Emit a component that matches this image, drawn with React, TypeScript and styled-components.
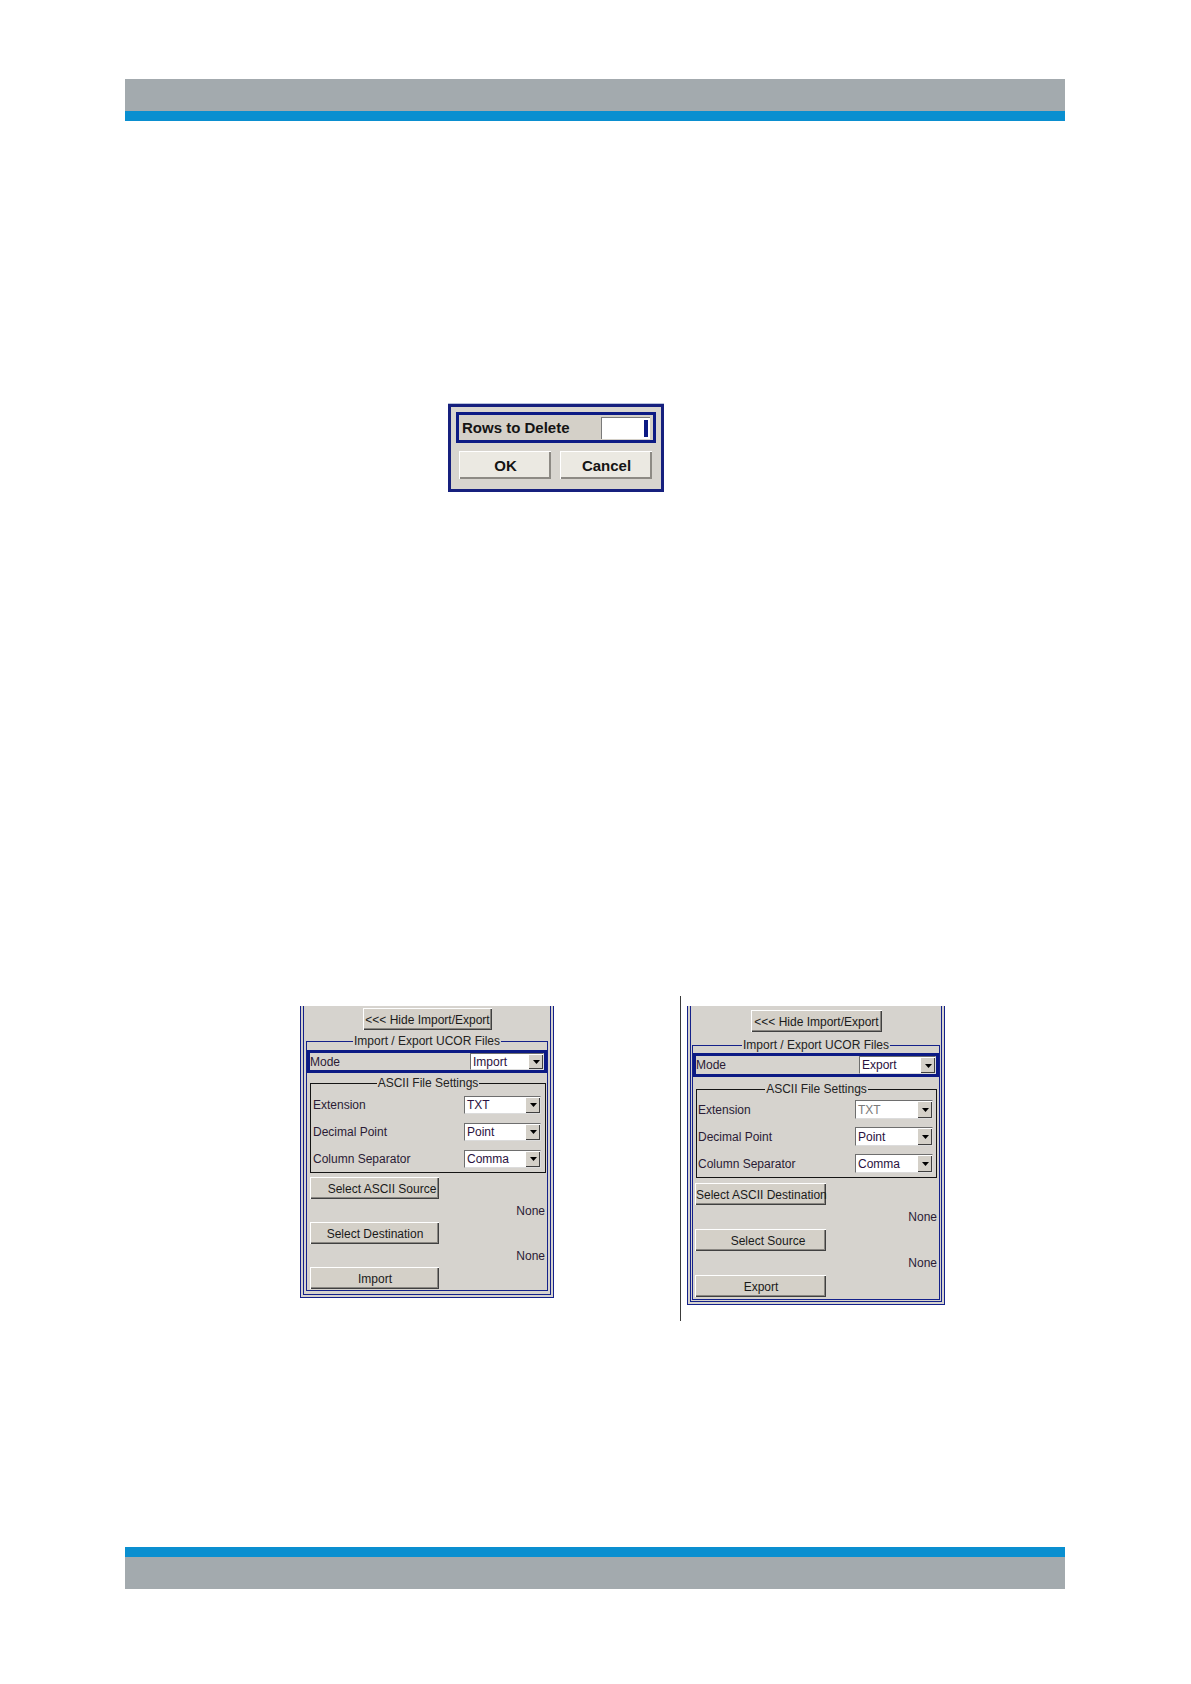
import React from 'react';
import styled, { createGlobalStyle } from 'styled-components';

const GlobalStyle = createGlobalStyle`
  *, *::before, *::after { box-sizing: border-box; }
  html, body { margin: 0; padding: 0; background: #fff; }
  body { font-family: "Liberation Sans", Arial, sans-serif; }
`;

const NAVY = '#14218a';

const Page = styled.div`
  width: 1191px;
  height: 1684px;
  overflow: hidden;
  display: flex;
  flex-direction: column;
`;

const Band = styled.div<{ $top?: number }>`
  width: 940px;
  margin: ${(p) => p.$top ?? 0}px 0 0 125px;
  display: flex;
  flex-direction: column;
`;

const BandGray = styled.div`
  height: 32px;
  background: #a3aaae;
`;

const BandBlue = styled.div`
  height: 10px;
  background: #0a8fd0;
`;

/* ---------- Rows to Delete dialog ---------- */

const Dialog = styled.div`
  margin: 283px 0 0 448px;
  width: 216px;
  padding: 5px 5px 10px;
  background: #d8d5cf;
  border: 3px solid #16207e;
  box-shadow: 0 -1px 0 #b9c2dc;
  display: flex;
  flex-direction: column;
  gap: 8px;
`;

const DeleteRow = styled.div`
  height: 31px;
  border: 3px solid #0c1a84;
  background: #d4d0c8;
  display: flex;
  align-items: center;
  justify-content: space-between;
  padding: 0 3px 0 3px;
`;

const DialogLabel = styled.span`
  font-size: 15px;
  font-weight: bold;
  color: #141414;
`;

const NumberField = styled.div`
  width: 49px;
  height: 22px;
  background: #fff;
  border-top: 1px solid #7a7a7a;
  border-left: 1px solid #7a7a7a;
  display: flex;
  align-items: center;
  justify-content: flex-end;
  padding-right: 2px;
`;

const Caret = styled.span`
  width: 4px;
  height: 17px;
  background: #0c1a84;
`;

const DialogButtons = styled.div`
  display: flex;
  gap: 9px;
  padding-left: 3px;
`;

const DialogButton = styled.button`
  width: 92px;
  height: 28px;
  padding: 0;
  background: #ebe9e2;
  border: none;
  border-top: 1px solid #fff;
  border-left: 1px solid #fff;
  box-shadow: inset -2px -2px 0 #8d8a84;
  font-family: inherit;
  font-size: 15px;
  font-weight: bold;
  color: #141414;
`;

/* ---------- Import / Export panels ---------- */

const Figures = styled.div`
  display: flex;
  align-items: flex-start;
  margin-top: 504px;
  padding-left: 300px;
`;

const Divider = styled.div`
  width: 1px;
  height: 325px;
  margin: 0 6px 0 126px;
  background: #3a3a3a;
`;

const Panel = styled.div<{ $roomy?: boolean }>`
  width: ${(p) => (p.$roomy ? 258 : 254)}px;
  margin-top: ${(p) => (p.$roomy ? 10 : 10)}px;
  background: #d6d3ce;
  border: 4px double ${NAVY};
  border-top: none;
  padding: ${(p) => (p.$roomy ? '4px 1px 1px 1px' : '2px 2px 3px 2px')};
  display: flex;
  flex-direction: column;
  font-size: 12px;
  color: #2a1b35;
`;

const Button = styled.button<{ $w: number; $indent?: number }>`
  width: ${(p) => p.$w}px;
  height: 22px;
  padding: 0 0 0 ${(p) => p.$indent ?? 0}px;
  background: #d4d0c8;
  border: none;
  border-top: 1px solid #fff;
  border-left: 1px solid #fff;
  box-shadow: inset -1px -1px 0 #404040, inset -2px -2px 0 #8a8782;
  font-family: inherit;
  font-size: 12px;
  color: #1a1a1a;
  white-space: nowrap;
  overflow: visible;
  text-align: center;
`;

const HideButton = styled(Button)`
  align-self: center;
`;

const Group = styled.fieldset<{ $roomy?: boolean }>`
  margin: ${(p) => (p.$roomy ? 6 : 4)}px 0 0;
  padding: 0 0 ${(p) => (p.$roomy ? 2 : 1)}px;
  border: 1px solid ${NAVY};
  min-width: 0;
  display: flex;
  flex-direction: column;
`;

const SubGroup = styled.fieldset<{ $roomy?: boolean }>`
  margin: ${(p) => (p.$roomy ? '5px 2px 0 3px' : '3px 1px 0 3px')};
  padding: ${(p) => (p.$roomy ? 0 : 1)}px 0 0;
  border: 1px solid #141414;
  min-width: 0;
`;

const Legend = styled.legend`
  margin: 0 auto;
  padding: 0 1px;
  font-size: 12px;
  line-height: 14px;
  color: #222;
`;

const ModeRow = styled.div<{ $roomy?: boolean }>`
  height: ${(p) => (p.$roomy ? 24 : 23)}px;
  margin-top: ${(p) => (p.$roomy ? 1 : 2)}px;
  border: 3px solid #0c1a84;
  display: flex;
  align-items: center;
  justify-content: space-between;
`;

const SettingRow = styled.div<{ $roomy?: boolean }>`
  height: 27px;
  display: flex;
  align-items: center;
  justify-content: space-between;
  padding: ${(p) => (p.$roomy ? '0 3px 0 1px' : '0 4px 0 2px')};
`;

const SelectBox = styled.div<{ $w: number; $h: number }>`
  width: ${(p) => p.$w}px;
  height: ${(p) => p.$h}px;
  display: flex;
  background: #fff;
  border: 1px solid;
  border-color: #6e6e6e #dcdcdc #dcdcdc #6e6e6e;
`;

const SelectText = styled.span<{ $dim?: boolean }>`
  flex: 1;
  padding-left: 2px;
  display: flex;
  align-items: center;
  color: ${(p) => (p.$dim ? '#7a7a7a' : '#2a1240')};
`;

const SelectArrow = styled.span`
  width: 15px;
  background: #d4d0c8;
  border-top: 1px solid #fff;
  border-left: 1px solid #fff;
  box-shadow: inset -1px -1px 0 #404040;
  display: flex;
  align-items: center;
  justify-content: center;
`;

const Actions = styled.div<{ $roomy?: boolean }>`
  margin: ${(p) => (p.$roomy ? '5px 0 0 2px' : '4px 0 0 3px')};
  display: flex;
  flex-direction: column;
`;

const NoneRow = styled.div<{ $h: number }>`
  height: ${(p) => p.$h}px;
  display: flex;
  align-items: center;
  justify-content: flex-end;
  padding-right: 2px;
`;

type SelectProps = { value: string; w: number; h: number; dim?: boolean };

const Select = ({ value, w, h, dim }: SelectProps) => (
  <SelectBox $w={w} $h={h}>
    <SelectText $dim={dim}>{value}</SelectText>
    <SelectArrow>
      <svg width="7" height="4" viewBox="0 0 7 4">
        <path d="M0 0h7L3.5 4z" fill="#000" />
      </svg>
    </SelectArrow>
  </SelectBox>
);

type Action = { label: string; indent?: number };

type PanelProps = {
  mode: string;
  actions: Action[];
  roomy?: boolean;
  dimExtension?: boolean;
};

const ImportExportPanel = ({ mode, actions, roomy, dimExtension }: PanelProps) => {
  const btnW = roomy ? 131 : 129;
  const selW = roomy ? 78 : 77;
  const selH = roomy ? 19 : 18;
  const settings = [
    { label: 'Extension', value: 'TXT', dim: dimExtension },
    { label: 'Decimal Point', value: 'Point' },
    { label: 'Column Separator', value: 'Comma' },
  ];

  return (
    <Panel $roomy={roomy}>
      <HideButton $w={btnW}>&lt;&lt;&lt; Hide Import/Export</HideButton>
      <Group $roomy={roomy}>
        <Legend>Import / Export UCOR Files</Legend>
        <ModeRow $roomy={roomy}>
          <span>Mode</span>
          <Select value={mode} w={roomy ? 77 : 74} h={roomy ? 18 : 17} />
        </ModeRow>
        <SubGroup $roomy={roomy}>
          <Legend>ASCII File Settings</Legend>
          {settings.map((s) => (
            <SettingRow key={s.label} $roomy={roomy}>
              <span>{s.label}</span>
              <Select value={s.value} w={selW} h={selH} dim={s.dim} />
            </SettingRow>
          ))}
        </SubGroup>
        <Actions $roomy={roomy}>
          {actions.map((a, i) => (
            <React.Fragment key={a.label}>
              <Button $w={btnW} $indent={a.indent}>
                {a.label}
              </Button>
              {i < actions.length - 1 && (
                <NoneRow $h={roomy ? 24 : 23}>None</NoneRow>
              )}
            </React.Fragment>
          ))}
        </Actions>
      </Group>
    </Panel>
  );
};

const App = () => {
  return (
    <Page>
      <GlobalStyle />
      <Band $top={79}>
        <BandGray />
        <BandBlue />
      </Band>

      <Dialog>
        <DeleteRow>
          <DialogLabel>Rows to Delete</DialogLabel>
          <NumberField>
            <Caret />
          </NumberField>
        </DeleteRow>
        <DialogButtons>
          <DialogButton>OK</DialogButton>
          <DialogButton>Cancel</DialogButton>
        </DialogButtons>
      </Dialog>

      <Figures>
        <ImportExportPanel
          mode="Import"
          actions={[
            { label: 'Select ASCII Source', indent: 14 },
            { label: 'Select Destination' },
            { label: 'Import' },
          ]}
        />
        <Divider />
        <ImportExportPanel
          roomy
          dimExtension
          mode="Export"
          actions={[
            { label: 'Select ASCII Destination' },
            { label: 'Select Source', indent: 14 },
            { label: 'Export' },
          ]}
        />
      </Figures>

      <Band $top={226}>
        <BandBlue />
        <BandGray />
      </Band>
    </Page>
  );
};

export default App;
